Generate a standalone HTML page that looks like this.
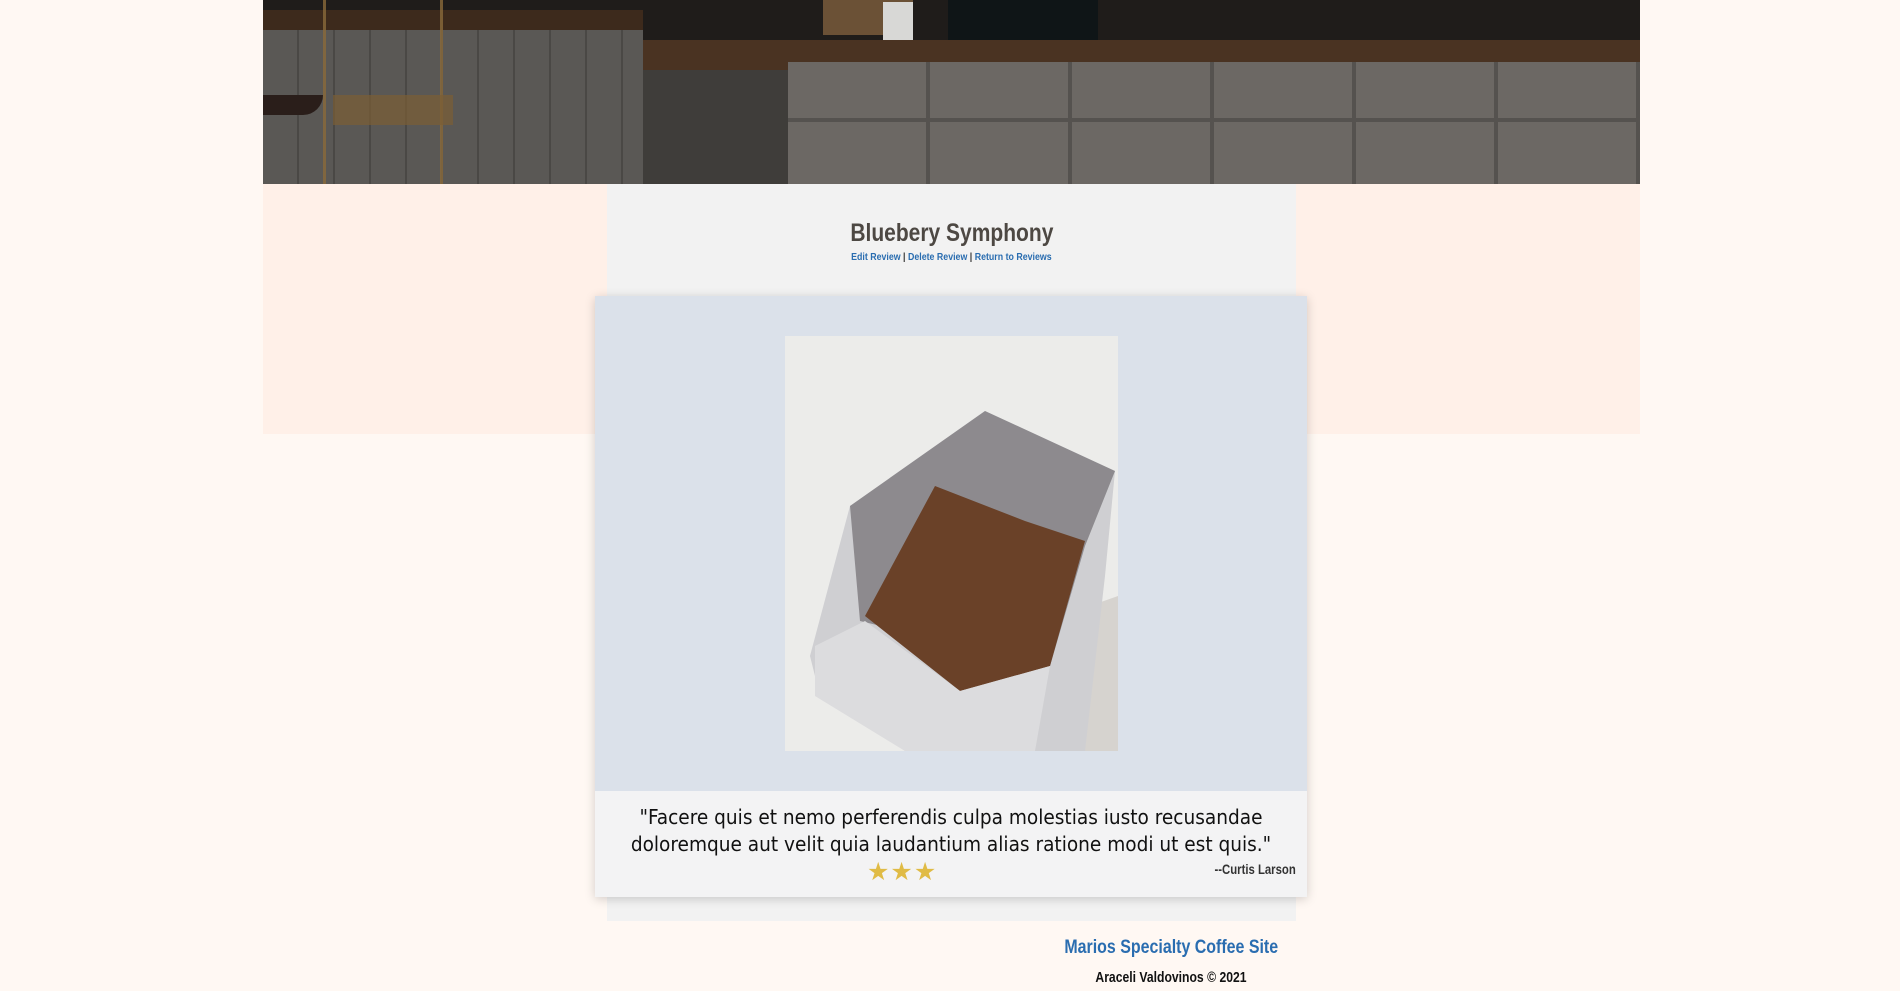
<!DOCTYPE html>
<html><head><meta charset="utf-8"><style>
body{margin:0;width:1900px;height:991px;background:#fff8f3;position:relative;overflow:hidden;font-family:"Liberation Sans",sans-serif}
.abs{position:absolute}
.cond{font-family:"Liberation Sans",sans-serif;font-weight:bold;white-space:nowrap}
.sx{display:inline-block;transform:scaleX(.84);transform-origin:center}
</style></head><body>
<!-- hero -->
<div class="abs" style="left:263px;top:0;width:1377px;height:184px;background:#3a3632;overflow:hidden">
  <div class="abs" style="left:0;top:0;width:1377px;height:40px;background:#1f1c1a"></div>
  <div class="abs" style="left:0;top:10px;width:380px;height:25px;background:#3d2a1c"></div>
  <div class="abs" style="left:0;top:30px;width:380px;height:154px;background:repeating-linear-gradient(90deg,#5a5855 0 34px,#4a4845 34px 36px)"></div>
  <div class="abs" style="left:380px;top:40px;width:997px;height:30px;background:#4a3322"></div>
  <div class="abs" style="left:380px;top:70px;width:145px;height:114px;background:#3f3d3a"></div>
  <div class="abs" style="left:525px;top:62px;width:852px;height:122px;background:repeating-linear-gradient(90deg,#6c6864 0 138px,#55524f 138px 142px)"></div>
  <div class="abs" style="left:525px;top:118px;width:852px;height:4px;background:#55524f"></div>
  <div class="abs" style="left:560px;top:0;width:90px;height:35px;background:#6b5136"></div>
  <div class="abs" style="left:620px;top:2px;width:30px;height:38px;background:#d8d8d6"></div>
  <div class="abs" style="left:685px;top:0;width:150px;height:40px;background:#0f1517"></div>
  <div class="abs" style="left:60px;top:0;width:120px;height:184px;border-left:3px solid #8a6a3a;border-right:3px solid #8a6a3a;box-sizing:border-box;opacity:.8"></div>
  <div class="abs" style="left:70px;top:95px;width:120px;height:30px;background:#7a5e34;opacity:.7"></div>
  <div class="abs" style="left:0;top:95px;width:60px;height:20px;background:#2a1e1a;border-radius:0 0 20px 0"></div>
</div>
<!-- peach band -->
<div class="abs" style="left:263px;top:184px;width:1377px;height:250px;background:#fff0e8"></div>
<!-- gray container -->
<div class="abs" style="left:607px;top:184px;width:689px;height:737px;background:#f2f2f2"></div>
<div class="abs cond" style="left:607px;top:219px;width:689px;text-align:center;font-size:25px;color:#4d4843"><span class="sx">Bluebery Symphony</span></div>
<div class="abs cond" style="left:607px;top:251px;width:689px;text-align:center;font-size:10.5px;color:#2a6db0"><span class="sx">Edit Review <span style="color:#333">|</span> Delete Review <span style="color:#333">|</span> Return to Reviews</span></div>
<!-- card -->
<div class="abs" style="left:595px;top:296px;width:712px;height:601px;box-shadow:0 2px 10px rgba(0,0,0,.18);background:#f3f3f4">
  <div class="abs" style="left:0;top:0;width:712px;height:495px;background:#dbe1ea"></div>
  <svg class="abs" style="left:190px;top:40px" width="333" height="415" viewBox="0 0 333 415">
    <rect width="333" height="415" fill="#ececea"/>
    <polygon points="220,300 333,260 333,415 280,415" fill="#d6d3cf"/>
    <polygon points="25,320 65,170 200,75 330,135 320,240 300,415 120,415 30,340" fill="#cfcfd2"/>
    <polygon points="65,170 200,75 330,135 300,210 265,330 75,285" fill="#8d8a8e"/>
    <polygon points="80,280 150,150 240,185 300,205 265,330 175,355" fill="#6a4128"/>
    <polygon points="30,310 80,285 175,355 265,330 250,415 120,415 30,360" fill="#dcdcde"/>
  </svg>
  <div class="abs" style="left:0;top:508px;width:712px;text-align:center;font-family:'DejaVu Sans Condensed','DejaVu Sans',sans-serif;font-size:20.6px;line-height:27px;color:#111;white-space:nowrap">"Facere quis et nemo perferendis culpa molestias iusto recusandae<br>doloremque aut velit quia laudantium alias ratione modi ut est quis."</div>
  <div class="abs" style="left:272px;top:561px;font-size:25px;color:#e0bb45;letter-spacing:1px">★★★</div>
  <div class="abs cond" style="right:11px;top:566px;font-size:13.5px;color:#333"><span class="sx" style="transform-origin:right">--Curtis Larson</span></div>
</div>
<div class="abs cond" style="left:1020px;top:937px;width:302px;text-align:center;font-size:19px;color:#2a6db0"><span class="sx">Marios Specialty Coffee Site</span></div>
<div class="abs cond" style="left:1020px;top:970px;width:302px;text-align:center;font-size:14.5px;color:#111"><span class="sx">Araceli Valdovinos © 2021</span></div>
</body></html>
